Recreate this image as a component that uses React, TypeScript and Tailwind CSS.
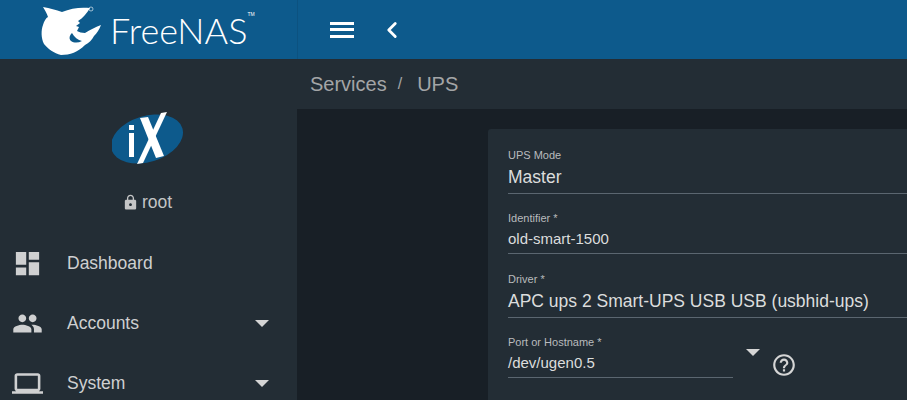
import React from "react";
import { ChevronLeft } from "lucide-react";

const ICONS: Record<string, string> = {
  dashboard: "M3 13h8V3H3v10zm0 8h8v-6H3v6zm10 0h8V11h-8v10zm0-18v6h8V3h-8z",
  accounts:
    "M16 11c1.66 0 2.99-1.34 2.99-3S17.66 5 16 5c-1.66 0-3 1.34-3 3s1.34 3 3 3zm-8 0c1.66 0 2.99-1.34 2.99-3S9.66 5 8 5C6.34 5 5 6.34 5 8s1.34 3 3 3zm0 2c-2.33 0-7 1.17-7 3.5V19h14v-2.5c0-2.33-4.67-3.5-7-3.5zm8 0c-.29 0-.62.02-.97.05 1.16.84 1.97 1.97 1.97 3.45V19h6v-2.5c0-2.33-4.67-3.5-7-3.5z",
  system:
    "M20 18c1.1 0 1.99-.9 1.99-2L22 6c0-1.1-.9-2-2-2H4c-1.1 0-2 .9-2 2v10c0 1.1.9 2 2 2H0v2h24v-2h-4zM4 6h16v10H4V6z",
};

function MatIcon({ name, className }: { name: string; className?: string }) {
  return (
    <svg className={className} viewBox="0 0 24 24" fill="currentColor" aria-hidden="true">
      <path d={ICONS[name]} />
    </svg>
  );
}

function Caret({ className = "" }: { className?: string }) {
  return <div className={`h-0 w-0 border-x-[7px] border-t-[7px] border-x-transparent border-t-[#d5d5d5] ${className}`} />;
}

function SharkLogo() {
  return (
    <svg className="h-[54px] w-[64px] shrink-0" viewBox="0 0 64 54" aria-hidden="true">
      <path
        fill="#fff"
        fillRule="evenodd"
        d="M2 4 C9 5 15 7 21 9 C30 5 40 4 49 5 C46 10 42 15 37 18 L39 20 L35 23 L38 24 L36 28 C38 29 41 30 44 30 C49 27 54 24 60 22 C58 27 56 30 53 33 C51 37 48 40 44 42 C37 49 29 52 20 52 C13 50 7 46 3 41 C0 35 0 27 2 22 C3 18 5 15 7 14 C6 11 4 7 2 4 Z M31 30 C28 33 28 36 30 38 C33 40 37 40 41 38 C37 37 33 34 31 30 Z"
      />
      <circle cx="50" cy="6" r="2" fill="none" stroke="#fff" strokeWidth="0.6" />
    </svg>
  );
}

function IxLogo() {
  return (
    <svg className="h-[54px] w-[72px]" viewBox="0 0 72 54" aria-hidden="true">
      <ellipse cx="35" cy="27" rx="37" ry="23" transform="rotate(-17 35 27)" fill="#0d5a8c" />
      <rect x="17" y="21" width="5" height="24" fill="#fff" />
      <rect x="17" y="13" width="5" height="5" fill="#fff" />
      <path fill="#fff" d="M28 6 L36 5 L52 44 L44 46 Z" />
      <path fill="#fff" d="M49 1 L55 0 L31 51 L25 52 Z" />
    </svg>
  );
}

function NavItem({ icon, label, caret }: { icon: string; label: string; caret?: boolean }) {
  return (
    <div className="flex h-[60px] shrink-0 items-center text-[#cfd0d1]">
      <div className="flex w-[67px] shrink-0 pl-[12px]">
        <MatIcon name={icon} className="h-[31px] w-[31px]" />
      </div>
      <span className="text-[17.5px]">{label}</span>
      {caret && <Caret className="ml-auto mr-[28px]" />}
    </div>
  );
}

function Field({
  label,
  value,
  big,
  className = "",
}: {
  label: string;
  value: string;
  big?: boolean;
  className?: string;
}) {
  return (
    <div className={`border-b border-[#5b6670] ${className}`}>
      <div className="text-[11px] leading-[14px] text-[#b9bbbd]">{label}</div>
      <div className={`${big ? "text-[17.5px] leading-[31px]" : "text-[15px] leading-[28px]"} text-[#dcdddd]`}>{value}</div>
    </div>
  );
}

export default function App() {
  return (
    <div className="flex h-[400px] w-[907px] flex-col overflow-hidden bg-[#181f26] font-['Liberation_Sans',Arial,sans-serif]">
      <header className="flex h-[59px] shrink-0 items-center bg-[#0d5a8c] text-white">
        <div className="flex h-full w-[298px] shrink-0 items-center border-r border-[#0c5280] pl-[41px]">
          <SharkLogo />
          <span className="ml-[5px] mt-[1px] font-['Lato',sans-serif] text-[36px] leading-none font-light">FreeNAS</span>
          <span className="mb-[30px] text-[5px]">TM</span>
        </div>
        <div className="ml-[32px] flex flex-col gap-[3.5px]">
          <div className="h-[3px] w-[24px] bg-white" />
          <div className="h-[3px] w-[24px] bg-white" />
          <div className="h-[3px] w-[24px] bg-white" />
        </div>
        <ChevronLeft className="ml-[25px] h-[26px] w-[26px]" strokeWidth={2.6} />
      </header>

      <div className="flex min-h-0 flex-1">
        <aside className="flex w-[297px] shrink-0 flex-col bg-[#232d35]">
          <div className="mt-[53px] flex justify-center pr-[1px]">
            <IxLogo />
          </div>
          <div className="mt-[24px] flex items-center justify-center gap-[3px] pr-[3px] text-[#c4c5c6]">
            <svg className="h-[17px] w-[17px]" viewBox="0 0 24 24" fill="currentColor" aria-hidden="true">
              <path d="M18 8h-1V6c0-2.76-2.24-5-5-5S7 3.24 7 6v2H6c-1.1 0-2 .9-2 2v10c0 1.1.9 2 2 2h12c1.1 0 2-.9 2-2V10c0-1.1-.9-2-2-2zm-6 9c-1.1 0-2-.9-2-2s.9-2 2-2 2 .9 2 2-.9 2-2 2zm3.1-9H8.9V6c0-1.71 1.39-3.1 3.1-3.1 1.71 0 3.1 1.39 3.1 3.1v2z" />
            </svg>
            <span className="text-[17.5px] leading-[24px]">root</span>
          </div>
          <div className="mt-[19px] flex flex-col">
            <NavItem icon="dashboard" label="Dashboard" />
            <NavItem icon="accounts" label="Accounts" caret />
            <NavItem icon="system" label="System" caret />
          </div>
        </aside>

        <main className="flex min-w-0 flex-1 flex-col">
          <div className="flex h-[50px] shrink-0 items-center bg-[#232d35] pl-[13px] text-[20px] text-[#a3a5a7]">
            <span>Services</span>
            <span className="ml-[11px] text-[16px]">/</span>
            <span className="ml-[15px]">UPS</span>
          </div>
          <div className="flex-1 pl-[191px] pt-[20px]">
            <section className="h-[300px] rounded-tl-[3px] bg-[#232d35] pl-[20px] pt-[19px]">
              <Field label="UPS Mode" value="Master" big />
              <Field label="Identifier *" value="old-smart-1500" className="mt-[17px]" />
              <Field label="Driver *" value="APC ups 2 Smart-UPS USB USB (usbhid-ups)" big className="mt-[18px]" />
              <div className="mt-[17px] flex items-start">
                <Field label="Port or Hostname *" value="/dev/ugen0.5" className="w-[225px]" />
                <Caret className="ml-[13px] mt-[14px]" />
                <svg className="ml-[11px] mt-[17px] h-[26px] w-[26px] text-[#d5d5d5]" viewBox="0 0 24 24" fill="currentColor" aria-hidden="true">
                  <path d="M11 18h2v-2h-2v2zm1-16C6.48 2 2 6.48 2 12s4.48 10 10 10 10-4.48 10-10S17.52 2 12 2zm0 18c-4.41 0-8-3.59-8-8s3.59-8 8-8 8 3.59 8 8-3.59 8-8 8zm0-14c-2.21 0-4 1.79-4 4h2c0-1.1.9-2 2-2s2 .9 2 2c0 2-3 1.75-3 5h2c0-2.25 3-2.5 3-5 0-2.21-1.79-4-4-4z" />
                </svg>
              </div>
            </section>
          </div>
        </main>
      </div>
    </div>
  );
}
